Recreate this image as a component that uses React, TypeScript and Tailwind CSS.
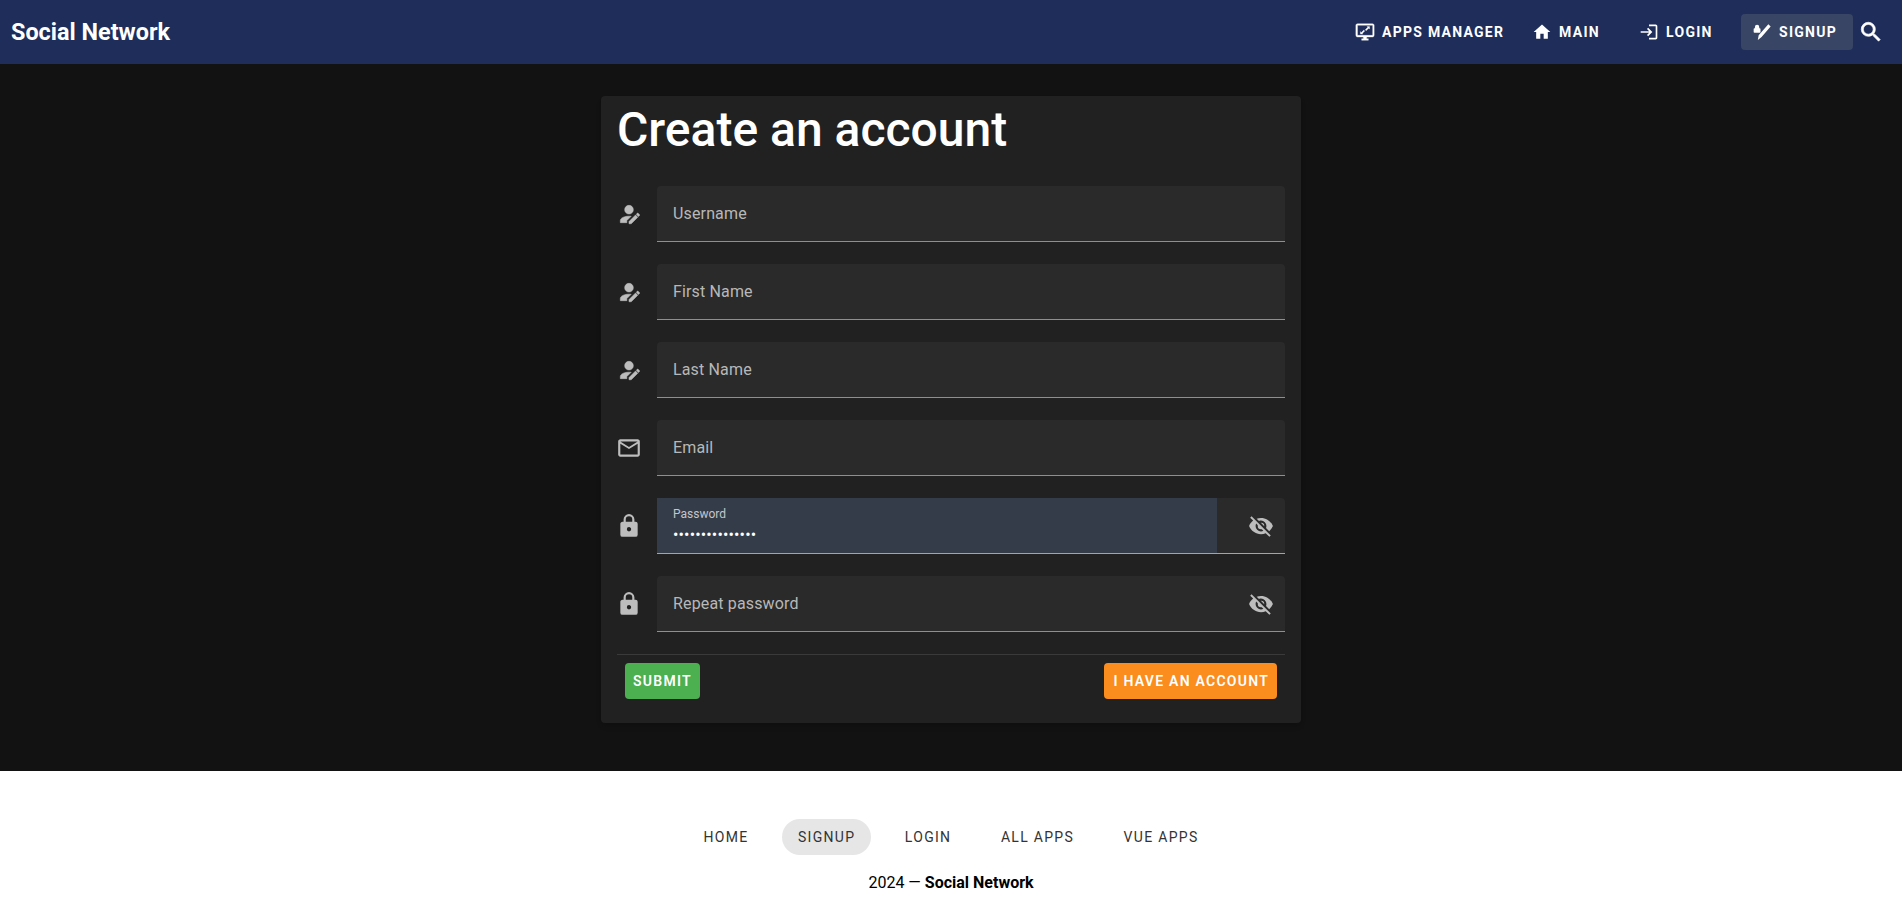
import React from "react";

const P = {
  home: "M10,20V14H14V20H19V12H22L12,3L2,12H5V20H10Z",
  magnify: "M9.5,3A6.5,6.5 0 0,1 16,9.5C16,11.11 15.41,12.59 14.44,13.73L14.71,14H15.5L20.5,19L19,20.5L14,15.5V14.71L13.73,14.44C12.59,15.41 11.11,16 9.5,16A6.5,6.5 0 0,1 3,9.5A6.5,6.5 0 0,1 9.5,3M9.5,5C7,5 5,7 5,9.5C5,12 7,14 9.5,14C12,14 14,12 14,9.5C14,7 12,5 9.5,5Z",
  login: "M11 7L9.6 8.4L12.2 11H2V13H12.2L9.6 15.6L11 17L16 12L11 7M20 19H12V21H20C21.1 21 22 20.1 22 19V5C22 3.9 21.1 3 20 3H12V5H20V19Z",
  email: "M22 6C22 4.9 21.1 4 20 4H4C2.9 4 2 4.9 2 6V18C2 19.1 2.9 20 4 20H20C21.1 20 22 19.1 22 18V6M20 6L12 11L4 6H20M20 18H4V8L12 13L20 8V18Z",
  lock: "M12,17A2,2 0 0,0 14,15C14,13.89 13.1,13 12,13A2,2 0 0,0 10,15A2,2 0 0,0 12,17M18,8A2,2 0 0,1 20,10V20A2,2 0 0,1 18,22H6A2,2 0 0,1 4,20V10C4,8.89 4.9,8 6,8H7V6A5,5 0 0,1 12,1A5,5 0 0,1 17,6V8H18M12,3A3,3 0 0,0 9,6V8H15V6A3,3 0 0,0 12,3Z",
  eyeOff: "M11.83,9L15,12.16C15,12.11 15,12.05 15,12A3,3 0 0,0 12,9C11.94,9 11.89,9 11.83,9M7.53,9.8L9.08,11.35C9.03,11.56 9,11.77 9,12A3,3 0 0,0 12,15C12.22,15 12.44,14.97 12.65,14.92L14.2,16.47C13.53,16.8 12.79,17 12,17A5,5 0 0,1 7,12C7,11.21 7.2,10.47 7.53,9.8M2,4.27L4.28,6.55L4.73,7C3.08,8.3 1.78,10 1,12C2.73,16.39 7,19.5 12,19.5C13.55,19.5 15.03,19.2 16.38,18.66L16.81,19.08L19.73,22L21,20.73L3.27,3M12,7A5,5 0 0,1 17,12C17,12.64 16.87,13.26 16.64,13.82L19.57,16.75C21.07,15.5 22.27,13.86 23,12C21.27,7.61 17,4.5 12,4.5C10.6,4.5 9.26,4.75 8,5.2L10.17,7.35C10.74,7.13 11.35,7 12,7Z",
  accountEdit: "M21.7,13.35L20.7,14.35L18.65,12.3L19.65,11.3C19.86,11.09 20.21,11.09 20.42,11.3L21.7,12.58C21.91,12.79 21.91,13.14 21.7,13.35M12,18.94L18.06,12.88L20.11,14.93L14.06,21H12V18.94M12,14C7.58,14 4,15.79 4,18V20H10V18.11L14,14.11C13.34,14.03 12.67,14 12,14M12,4A4,4 0 0,0 8,8A4,4 0 0,0 12,12A4,4 0 0,0 16,8A4,4 0 0,0 12,4Z",
  monitor: "M21,16H3V4H21M21,2H3C1.89,2 1,2.89 1,4V16A2,2 0 0,0 3,18H10V20H8V22H16V20H14V18H21A2,2 0 0,0 23,16V4C23,2.89 22.1,2 21,2Z M14.5,5.5L17.5,5.5V8.5L16.4,7.4L13.4,10.4L12.3,9.3L15.3,6.3Z M9.5,14.5L6.5,14.5V11.5L7.6,12.6L10.6,9.6L11.7,10.7L8.7,13.7Z",
  signup: "M19.6,2.6L22.4,5.4L11.5,18L7,21.5L8,16Z M3.5,7.5V6A2.6,2.6 0 0,1 8.7,6V7.5H9.2A1,1 0 0,1 10.2,8.5V12A1,1 0 0,1 9.2,13H3A1,1 0 0,1 2,12V8.5A1,1 0 0,1 3,7.5Z",
};

function Icon({ d, className }: { d: string; className?: string }) {
  return (
    <svg viewBox="0 0 24 24" fill="currentColor" className={className}>
      <path d={d} />
    </svg>
  );
}

function NavButton({ icon, label, active, className, iconClass }: { icon: string; label: string; active?: boolean; className?: string; iconClass?: string }) {
  return (
    <button
      className={`flex h-9 items-center rounded pl-[11px] pr-4 text-sm font-bold uppercase tracking-[1.25px] text-white ${active ? "bg-[#394565]" : ""} ${className ?? ""}`}
    >
      <Icon d={icon} className={`mr-[7px] h-5 w-5 ${iconClass ?? ""}`} />
      {label}
    </button>
  );
}

function Field({ icon, label, type = "text", eye, heavy }: { icon: string; label: string; type?: string; eye?: boolean; heavy?: boolean }) {
  return (
    <div className="mb-[22px] flex h-14 items-center">
      <Icon d={icon} className={`mr-[15px] -ml-px h-[26px] w-[26px] shrink-0 text-[#bdbdbd] ${heavy ? "stroke-current stroke-[0.5]" : ""}`} />
      <div className="flex h-14 flex-1 items-center rounded-t border-b border-[#8f8f8f] bg-[#2a2a2a] pr-3 pl-4">
        <input
          type={type}
          placeholder={label}
          readOnly
          className="h-full min-w-0 flex-1 bg-transparent text-base tracking-[0.15px] text-white outline-none placeholder:text-[#b8b8b8]"
        />
        {eye && <Icon d={P.eyeOff} className="-mr-px h-[26px] w-[26px] shrink-0 text-[#bdbdbd]" />}
      </div>
    </div>
  );
}

function AutofilledField() {
  return (
    <div className="mb-[22px] flex h-14 items-center">
      <Icon d={P.lock} className="mr-[15px] -ml-px h-[26px] w-[26px] shrink-0 text-[#bdbdbd]" />
      <div className="flex h-14 flex-1 items-stretch rounded-t border-b border-[#9fa4ad] bg-[#2a2a2a]">
        <div className="flex flex-1 flex-col bg-[#343c4a] pl-4">
          <label className="mt-[7px] text-xs leading-[18px] text-[#c4c6ca]">Password</label>
          <input
            type="password"
            value="aaaaaaaaaaaaaaa"
            readOnly
            className="w-full bg-transparent text-base leading-6 tracking-[0.15px] text-white outline-none"
          />
        </div>
        <div className="flex w-[68px] items-center justify-end pr-[11px]">
          <Icon d={P.eyeOff} className="h-[26px] w-[26px] text-[#bdbdbd]" />
        </div>
      </div>
    </div>
  );
}

function FooterLink({ label, active }: { label: string; active?: boolean }) {
  return (
    <a className={`flex h-9 items-center rounded-full px-4 text-sm font-normal uppercase tracking-[1.3px] text-[#333] ${active ? "bg-[#e6e6e6]" : ""}`}>
      {label}
    </a>
  );
}

export default function App() {
  return (
    <div className="flex min-h-[919px] flex-col bg-white font-['Roboto',sans-serif]">
      <header className="flex h-16 items-center justify-between bg-[#1e2d59] pl-[11px] pr-[13px]">
        <div className="pt-px text-[23.4px] font-bold text-white">Social Network</div>
        <nav className="flex items-center">
          <NavButton icon={P.monitor} label="Apps Manager" iconClass="stroke-current stroke-[0.4]" />
          <NavButton icon={P.home} label="Main" className="ml-px w-[95px]" />
          <NavButton icon={P.login} label="Login" className="ml-3 w-[101px]" />
          <NavButton icon={P.signup} label="Signup" active className="ml-3" />
          <button className="flex h-9 w-9 items-center justify-center text-white">
            <Icon d={P.magnify} className="h-[26px] w-[26px] stroke-current stroke-[0.6]" />
          </button>
        </nav>
      </header>

      <main className="flex h-[707px] flex-col items-center bg-[#121212] pt-8">
        <section className="h-[627px] w-[700px] rounded bg-[#212121] px-4 shadow-md">
          <h1 className="h-[90px] text-[48px] leading-[68px] font-medium text-white">Create an account</h1>
          <Field icon={P.accountEdit} label="Username" heavy />
          <Field icon={P.accountEdit} label="First Name" heavy />
          <Field icon={P.accountEdit} label="Last Name" heavy />
          <Field icon={P.email} label="Email" />
          <AutofilledField />
          <Field icon={P.lock} label="Repeat password" type="password" eye />
          <div className="flex justify-between border-t border-[#3a3a3a] p-2">
            <button className="h-9 rounded bg-[#4caf50] px-2 text-sm font-semibold uppercase tracking-[1.25px] text-white">Submit</button>
            <button className="h-9 rounded bg-[#fb8c1e] pl-[10px] pr-2 text-sm font-semibold uppercase tracking-[1.25px] text-white">I have an account</button>
          </div>
        </section>
      </main>

      <footer className="flex h-[148px] flex-col items-center bg-white pt-12">
        <div className="flex gap-[17.5px]">
          <FooterLink label="Home" />
          <FooterLink label="Signup" active />
          <FooterLink label="Login" />
          <FooterLink label="All Apps" />
          <FooterLink label="Vue Apps" />
        </div>
        <p className="mt-4 text-base text-black">
          2024 — <strong className="font-bold">Social Network</strong>
        </p>
      </footer>
    </div>
  );
}
